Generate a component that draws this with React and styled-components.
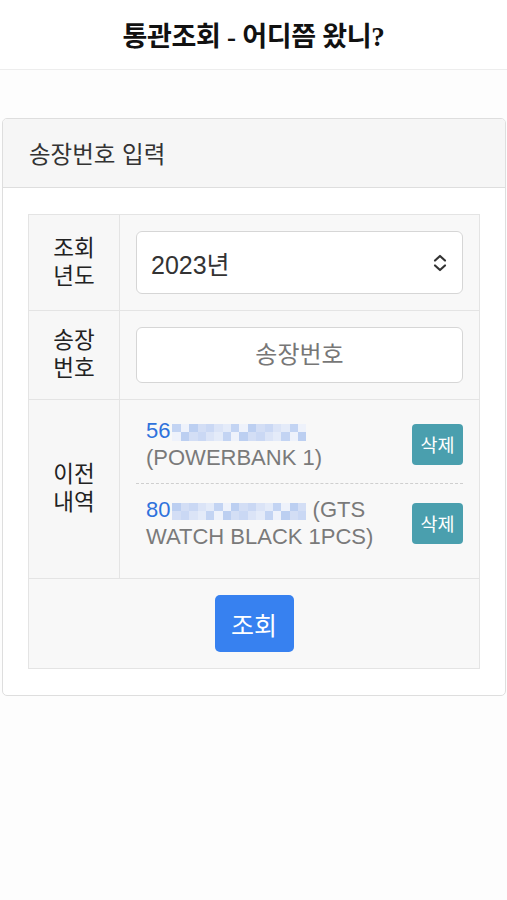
import React from "react";
import styled, { createGlobalStyle } from "styled-components";

const SANS = `"Liberation Sans", "Noto Sans CJK KR", "Noto Sans", sans-serif`;

const GlobalStyle = createGlobalStyle`
  html, body {
    margin: 0;
    padding: 0;
    background: #fdfdfd;
    font-family: ${SANS};
    color: #222;
  }
  * {
    box-sizing: border-box;
  }
`;

const TopBar = styled.header`
  height: 70px;
  background: #fff;
  border-bottom: 1px solid #ededed;
  display: flex;
  align-items: center;
  justify-content: center;
  h1 {
    margin: 0;
    font-family: "Liberation Serif", "Noto Sans CJK KR", serif;
    font-size: 27px;
    font-weight: 700;
    color: #111;
    letter-spacing: -0.3px;
  }
`;

const Page = styled.main`
  padding: 48px 1px 0 2px;
`;

const Card = styled.section`
  border: 1px solid #dedede;
  border-radius: 5px;
  background: #fff;
  overflow: hidden;
`;

const CardHeader = styled.div`
  height: 69px;
  display: flex;
  align-items: center;
  padding-left: 26px;
  background: #f6f6f6;
  border-bottom: 1px solid #dedede;
  font-size: 23.5px;
  color: #333;
`;

const CardBody = styled.div`
  padding: 26px 25px 26px 25px;
`;

const Table = styled.div`
  display: grid;
  grid-template-columns: 91px 1fr;
  border-top: 1px solid #e4e4e4;
  border-left: 1px solid #e4e4e4;
  background: #f8f8f8;
`;

const Label = styled.div`
  display: flex;
  align-items: center;
  justify-content: center;
  text-align: center;
  font-size: 22.5px;
  line-height: 28px;
  color: #222;
  border-right: 1px solid #e4e4e4;
  border-bottom: 1px solid #e4e4e4;
  background: #f7f7f7;
`;

const Cell = styled.div`
  padding: ${(p) => p.$pad || "16px 16px"};
  border-right: 1px solid #e4e4e4;
  border-bottom: 1px solid #e4e4e4;
  grid-column: ${(p) => (p.$full ? "1 / 3" : "auto")};
  display: ${(p) => (p.$full ? "flex" : "block")};
  justify-content: center;
`;

const Select = styled.div`
  height: 63px;
  border: 1px solid #d6d6d6;
  border-radius: 6px;
  background: #fff;
  display: flex;
  align-items: center;
  justify-content: space-between;
  padding: 0 14px 0 14px;
  font-size: 25px;
  color: #333;
`;

const Input = styled.input`
  display: block;
  width: 100%;
  height: 56px;
  border: 1px solid #d6d6d6;
  border-radius: 6px;
  background: #fff;
  text-align: center;
  font-family: ${SANS};
  font-size: 24px;
  outline: none;
  &::placeholder {
    color: #777;
  }
`;

const Entry = styled.div`
  display: flex;
  align-items: center;
  padding: 12px 0 12px 10px;
  border-bottom: ${(p) => (p.$last ? "none" : "1px dashed #cfcfcf")};
`;

const EntryText = styled.div`
  flex: 1;
  font-size: 22px;
  line-height: 27px;
  color: #7a7a7a;
  padding-right: 30px;
  .num {
    color: #2f72dc;
  }
`;

const Mosaic = styled.span`
  display: inline-grid;
  grid-template-columns: repeat(16, 1fr);
  width: 134px;
  height: 17px;
  margin-left: 2px;
  vertical-align: middle;
`;

const MosaicCell = styled.span`
  background: ${(p) => p.$shade};
`;

const shades = ["#c3d4f3", "#d3def5", "#e4ebf9", "#bccff1", "#dbe4f7", "#eef2fb", "#cad8f4"];

const Masked = ({ seed }) => (
  <Mosaic>
    {Array.from({ length: 32 }, (_, i) => (
      <MosaicCell key={i} $shade={shades[(i * 5 + seed * 3 + (i >> 4) * 2) % shades.length]} />
    ))}
  </Mosaic>
);

const DeleteButton = styled.button`
  width: 51px;
  height: 41px;
  border: none;
  border-radius: 4px;
  background: #4a9fae;
  color: #fff;
  font-family: ${SANS};
  font-size: 18.5px;
  padding: 0;
`;

const SearchButton = styled.button`
  width: 79px;
  height: 57px;
  border: none;
  border-radius: 5px;
  background: #3781f0;
  color: #fff;
  font-family: ${SANS};
  font-size: 25px;
  padding: 0;
`;

const Chevrons = () => (
  <svg width="16" height="20" viewBox="0 0 16 20" fill="none" stroke="#333" strokeWidth="2.2" strokeLinecap="round" strokeLinejoin="round">
    <path d="M3 7.5 L8 3 L13 7.5" />
    <path d="M3 12.5 L8 17 L13 12.5" />
  </svg>
);

const history = [
  { head: "56", rest: "(POWERBANK 1)", br: true },
  { head: "80", rest: " (GTS WATCH BLACK 1PCS)", br: false },
];

export default function App() {
  return (
    <>
      <GlobalStyle />
      <TopBar>
        <h1>통관조회 - 어디쯤 왔니?</h1>
      </TopBar>
      <Page>
        <Card>
          <CardHeader>송장번호 입력</CardHeader>
          <CardBody>
            <Table>
              <Label>
                조회
                <br />
                년도
              </Label>
              <Cell>
                <Select>
                  <span>2023년</span>
                  <Chevrons />
                </Select>
              </Cell>
              <Label>
                송장
                <br />
                번호
              </Label>
              <Cell>
                <Input placeholder="송장번호" />
              </Cell>
              <Label>
                이전
                <br />
                내역
              </Label>
              <Cell $pad="5px 16px 16px">
                {history.map((h, i) => (
                  <Entry key={i} $last={i === history.length - 1}>
                    <EntryText>
                      <span className="num">{h.head}</span>
                      <Masked seed={i} />
                      {h.br && <br />}
                      {h.rest}
                    </EntryText>
                    <DeleteButton>삭제</DeleteButton>
                  </Entry>
                ))}
              </Cell>
              <Cell $full>
                <SearchButton>조회</SearchButton>
              </Cell>
            </Table>
          </CardBody>
        </Card>
      </Page>
    </>
  );
}
